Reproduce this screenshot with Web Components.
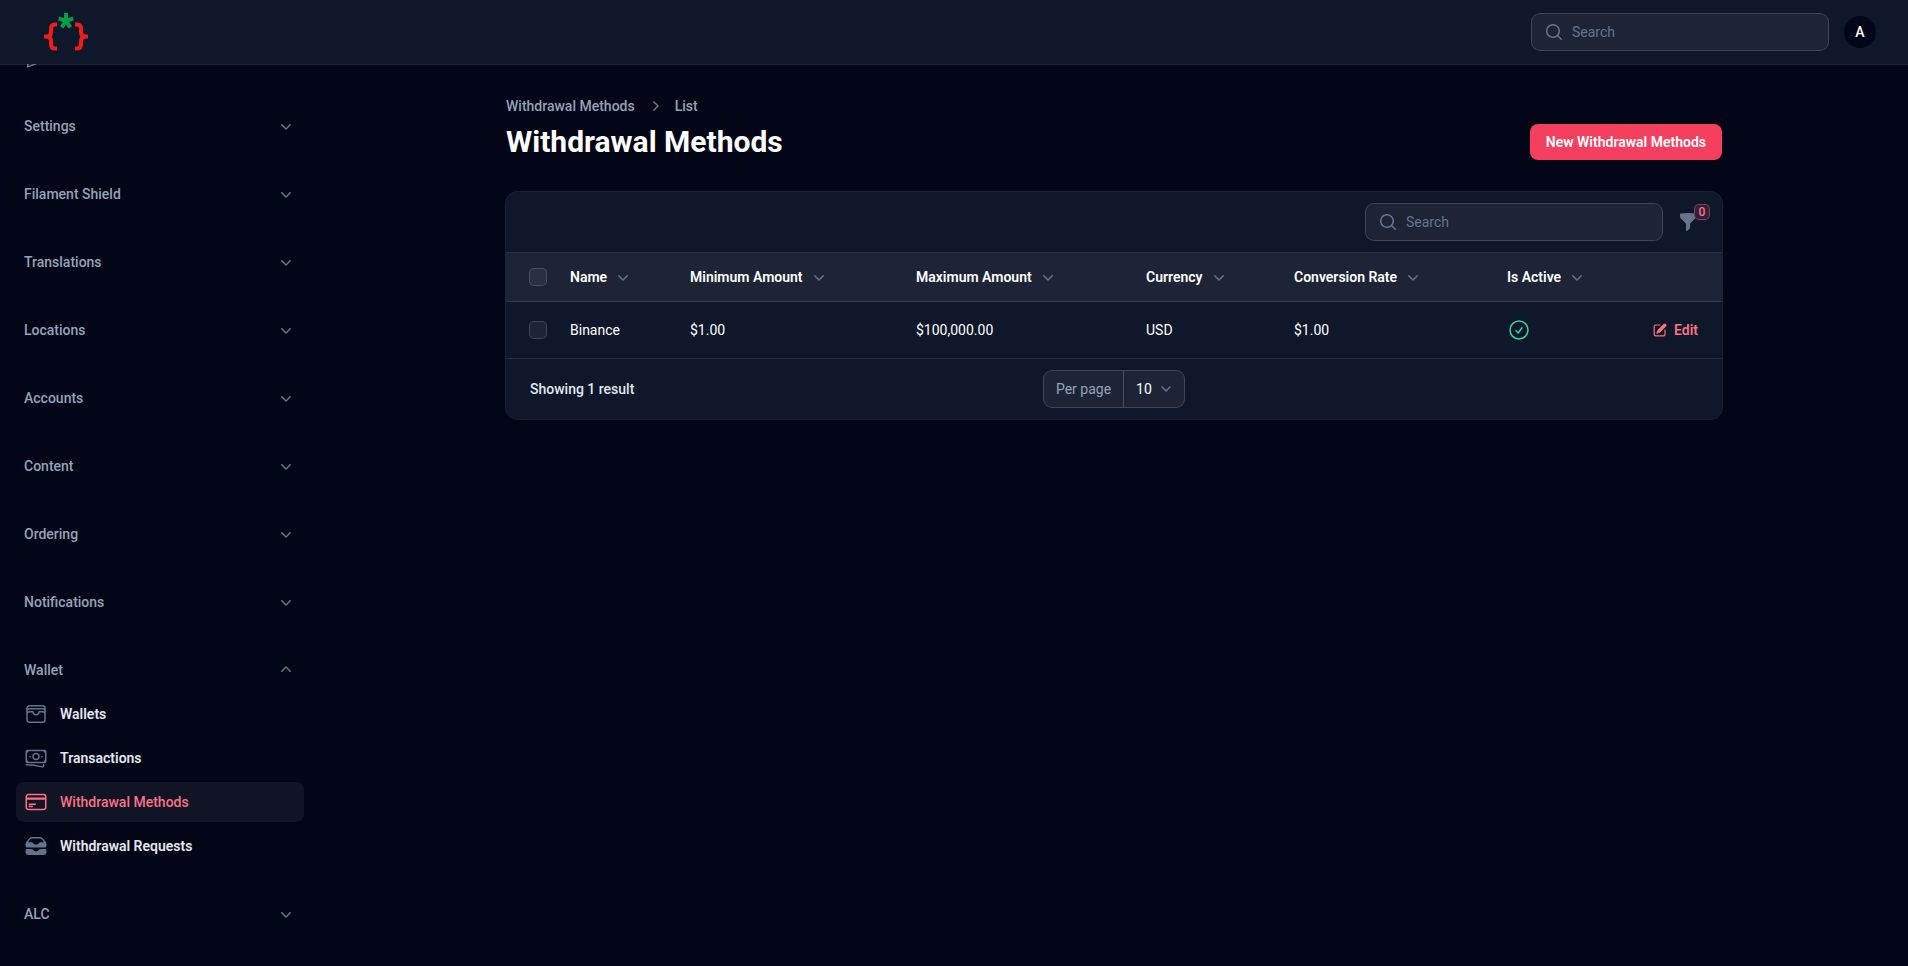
<!DOCTYPE html>
<html lang="en">
<head>
<meta charset="utf-8">
<meta name="viewport" content="width=device-width, initial-scale=1">
<title>Withdrawal Methods</title>
<style>
  :root {
    --bg: #020617;
    --surface: #0f172a;
    --muted: #94a3b8;
    --faint: #64748b;
    --line: rgba(255, 255, 255, .1);
    --ring: rgba(255, 255, 255, .2);
    --fill: rgba(255, 255, 255, .06);
    --accent: #f43f5e;
    --accent-soft: #fb7185;
    --success: #34d399;
  }
  * { box-sizing: border-box; }
  body {
    margin: 0;
    min-height: 100vh;
    background: var(--bg);
    color: #fff;
    font: 400 14px/20px Roboto, "Liberation Sans", sans-serif;
  }
</style>
</head>
<body>
<admin-app>
  <top-bar slot="top"></top-bar>
  <side-bar slot="side">
    <nav-item icon="send" aria-label="Messages"></nav-item>
    <nav-group label="Settings"></nav-group>
    <nav-group label="Filament Shield"></nav-group>
    <nav-group label="Translations"></nav-group>
    <nav-group label="Locations"></nav-group>
    <nav-group label="Accounts"></nav-group>
    <nav-group label="Content"></nav-group>
    <nav-group label="Ordering"></nav-group>
    <nav-group label="Notifications"></nav-group>
    <nav-group label="Wallet" open>
      <nav-item icon="wallet">Wallets</nav-item>
      <nav-item icon="banknotes">Transactions</nav-item>
      <nav-item icon="card" active>Withdrawal Methods</nav-item>
      <nav-item icon="inbox">Withdrawal Requests</nav-item>
    </nav-group>
    <nav-group label="ALC"></nav-group>
  </side-bar>
  <page-header>
    <a slot="parent" href="#methods">Withdrawal Methods</a>
    <span slot="current">List</span>
    <span slot="title">Withdrawal Methods</span>
    <span slot="action">New Withdrawal Methods</span>
  </page-header>
  <data-table></data-table>
</admin-app>

<script>
const define = (name, html, setup) => {
  const template = document.createElement('template');
  template.innerHTML = '<style>*{box-sizing:border-box}</style>' + html;
  customElements.define(name, class extends HTMLElement {
    constructor() {
      super();
      this.attachShadow({ mode: 'open' }).append(template.content.cloneNode(true));
    }
    connectedCallback() { if (setup) setup(this, this.shadowRoot); }
  });
};

const outline = d => `<svg viewBox="0 0 24 24" fill="none" stroke="currentColor" stroke-width="1.5" stroke-linecap="round" stroke-linejoin="round" aria-hidden="true"><path d="${d}"/></svg>`;
const solid = (d, box = 20) => `<svg viewBox="0 0 ${box} ${box}" fill="currentColor" aria-hidden="true"><path d="${d}"/></svg>`;
const ICONS = {
  send: outline('M6 12 3.269 3.125A59.769 59.769 0 0 1 21.485 12 59.768 59.768 0 0 1 3.27 20.875L5.999 12Zm0 0h7.5'),
  wallet: outline('M21 12a2.25 2.25 0 0 0-2.25-2.25H15a3 3 0 1 1-6 0H5.25A2.25 2.25 0 0 0 3 12m18 0v6a2.25 2.25 0 0 1-2.25 2.25H5.25A2.25 2.25 0 0 1 3 18v-6m18 0V9M3 12V9m18 0a2.25 2.25 0 0 0-2.25-2.25H5.25A2.25 2.25 0 0 0 3 9m18 0V6a2.25 2.25 0 0 0-2.25-2.25H5.25A2.25 2.25 0 0 0 3 6v3'),
  banknotes: outline('M2.25 18.75a60.07 60.07 0 0 1 15.797 2.101c.727.198 1.453-.342 1.453-1.096V18.75M3.75 4.5v.75A.75.75 0 0 1 3 6h-.75m0 0v-.375c0-.621.504-1.125 1.125-1.125H20.25M2.25 6v9m18-10.5v.75c0 .414.336.75.75.75h.75m-1.5-1.5h.375c.621 0 1.125.504 1.125 1.125v9.75c0 .621-.504 1.125-1.125 1.125h-.375m1.5-1.5H21a.75.75 0 0 0-.75.75v.75m0 0H3.75m0 0h-.375a1.125 1.125 0 0 1-1.125-1.125V15m1.5 1.5v-.75A.75.75 0 0 0 3 15h-.75M15 10.5a3 3 0 1 1-6 0 3 3 0 0 1 6 0Zm3 0h.008v.008H18V10.5Zm-12 0h.008v.008H6V10.5Z'),
  card: outline('M2.25 8.25h19.5M2.25 9h19.5m-16.5 5.25h6m-6 2.25h3m-3.75 3h15a2.25 2.25 0 0 0 2.25-2.25V6.75A2.25 2.25 0 0 0 19.5 4.5h-15a2.25 2.25 0 0 0-2.25 2.25v10.5A2.25 2.25 0 0 0 4.5 19.5Z'),
  inbox: solid('M1.5 9.832v1.793c0 1.036.84 1.875 1.875 1.875h17.25c1.035 0 1.875-.84 1.875-1.875V9.832a3 3 0 0 0-.722-1.952l-3.285-3.832A3 3 0 0 0 16.215 3h-8.43a3 3 0 0 0-2.278 1.048L2.222 7.88A3 3 0 0 0 1.5 9.832ZM7.785 4.5a1.5 1.5 0 0 0-1.139.524L3.881 8.25h3.165a3 3 0 0 1 2.496 1.336l.164.246a1.5 1.5 0 0 0 1.248.668h2.092a1.5 1.5 0 0 0 1.248-.668l.164-.246a3 3 0 0 1 2.496-1.336h3.165l-2.765-3.226a1.5 1.5 0 0 0-1.139-.524h-8.43ZM2.813 15c-.725 0-1.313.588-1.313 1.313V18a3 3 0 0 0 3 3h15a3 3 0 0 0 3-3v-1.688c0-.724-.588-1.312-1.313-1.312h-4.233a3 3 0 0 0-2.496 1.336l-.164.246a1.5 1.5 0 0 1-1.248.668h-2.092a1.5 1.5 0 0 1-1.248-.668l-.164-.246A3 3 0 0 0 7.046 15H2.812Z', 24).replace('<path ', '<path fill-rule="evenodd" '),
  check: outline('M9 12.75 11.25 15 15 9.75M21 12a9 9 0 1 1-18 0 9 9 0 0 1 18 0Z'),
  search: solid('M9 3.5a5.5 5.5 0 1 0 0 11 5.5 5.5 0 0 0 0-11ZM2 9a7 7 0 1 1 12.452 4.391l3.328 3.329a.75.75 0 1 1-1.06 1.06l-3.329-3.328A7 7 0 0 1 2 9Z').replace('<path ', '<path fill-rule="evenodd" '),
  down: solid('M5.22 8.22a.75.75 0 0 1 1.06 0L10 11.94l3.72-3.72a.75.75 0 1 1 1.06 1.06l-4.25 4.25a.75.75 0 0 1-1.06 0L5.22 9.28a.75.75 0 0 1 0-1.06Z'),
  right: solid('M8.22 5.22a.75.75 0 0 1 1.06 0l4.25 4.25a.75.75 0 0 1 0 1.06l-4.25 4.25a.75.75 0 0 1-1.06-1.06L11.94 10 8.22 6.28a.75.75 0 0 1 0-1.06Z'),
  funnel: solid('M2.628 1.601C5.028 1.206 7.49 1 10 1s4.973.206 7.372.601a.75.75 0 0 1 .628.74v2.288a2.25 2.25 0 0 1-.659 1.59l-4.682 4.683a2.25 2.25 0 0 0-.659 1.59v3.037c0 .684-.31 1.33-.844 1.757l-1.937 1.55A.75.75 0 0 1 8 18.25v-5.757a2.25 2.25 0 0 0-.659-1.591L2.659 6.22A2.25 2.25 0 0 1 2 4.629V2.34a.75.75 0 0 1 .628-.74Z'),
  pencil: solid('m5.433 13.917 1.262-3.155A4 4 0 0 1 7.58 9.42l6.92-6.918a2.121 2.121 0 0 1 3 3l-6.92 6.918c-.383.383-.84.685-1.343.886l-3.154 1.262a.5.5 0 0 1-.65-.65ZM3.5 5.75c0-.69.56-1.25 1.25-1.25H10A.75.75 0 0 0 10 3H4.75A2.75 2.75 0 0 0 2 5.75v9.5A2.75 2.75 0 0 0 4.75 18h9.5A2.75 2.75 0 0 0 17 15.25V10a.75.75 0 0 0-1.5 0v5.25c0 .69-.56 1.25-1.25 1.25h-9.5c-.69 0-1.25-.56-1.25-1.25v-9.5Z')
};

define('ui-icon', `
  <style>
    :host { display: block; flex: none; width: 20px; height: 20px; color: var(--faint); }
    svg { display: block; width: 100%; height: 100%; }
  </style><span></span>`,
  (host, root) => { root.querySelector('span').innerHTML = ICONS[host.getAttribute('name')] || ''; });

define('search-field', `
  <style>
    :host { display: block; width: 296px; max-width: 100%; }
    label {
      display: flex; align-items: center; gap: 8px; height: 36px; padding: 0 12px;
      border-radius: 8px; background: var(--fill); box-shadow: 0 0 0 1px var(--ring);
    }
    input {
      flex: 1; min-width: 0; height: 36px; padding: 0; border: 0; outline: 0;
      background: none; color: #fff; font: inherit;
    }
    input::placeholder { color: var(--faint); opacity: 1; }
  </style>
  <label><ui-icon name="search"></ui-icon><input type="text" placeholder="Search" aria-label="Search"></label>`);

define('brand-logo', `
  <style>
    :host { display: block; }
    svg { display: block; width: 48px; height: 40px; }
  </style>
  <svg viewBox="0 0 48 40" fill="none" role="img" aria-label="Home">
    <g stroke="#f21c17" stroke-width="4">
      <path d="M15 12.5h-2c-3 0-4 1.3-4 4v3.5c0 2.900-1.800 4.500-5 4.500h-2h2c3.200 0 5 1.600 5 4.500v3.500c0 2.700 1 4 4 4h2"/>
      <path d="M33 12.5h2c3 0 4 1.3 4 4v3.5c0 2.900 1.800 4.500 5 4.500h2h-2c-3.200 0-5 1.600-5 4.500v3.500c0 2.700-1 4-4 4h-2"/>
    </g>
    <path stroke="#049c47" stroke-width="4" d="M24 9V1M24 9l-7.200-2.600M24 9l7.200-2.600M24 9l-4.300 6.400M24 9l4.300 6.400"/>
  </svg>`);

define('top-bar', `
  <style>
    :host { display: block; }
    header {
      display: flex; align-items: center; gap: 16px; height: 64px; padding: 0 32px 0 42px;
      background: var(--surface); box-shadow: 0 1px 0 var(--line);
    }
    a { display: block; margin-right: auto; }
    button {
      width: 32px; height: 32px; padding: 0; border: 0; border-radius: 16px;
      background: var(--bg); color: #fff; font: 500 14px/32px Roboto, sans-serif;
    }
  </style>
  <header>
    <a href="#home"><brand-logo></brand-logo></a>
    <search-field></search-field>
    <button type="button" aria-label="User menu">A</button>
  </header>`);

define('nav-item', `
  <style>
    :host { display: block; }
    a {
      display: flex; align-items: center; gap: 12px; height: 40px; padding: 0 8px;
      border-radius: 8px; color: #e2e8f0; font-weight: 600; text-decoration: none;
    }
    ui-icon { width: 24px; height: 24px; }
    :host([active]) a { background: var(--fill); color: var(--accent-soft); font-weight: 500; }
    :host([active]) ui-icon { color: var(--accent-soft); }
  </style>
  <a href="#item"><ui-icon></ui-icon><slot></slot></a>`,
  (host, root) => {
    const icon = document.createElement('ui-icon');
    icon.setAttribute('name', host.getAttribute('icon'));
    root.querySelector('ui-icon').replaceWith(icon);
  });

define('nav-group', `
  <style>
    :host { display: flex; flex-direction: column; gap: 4px; }
    button {
      display: flex; align-items: center; justify-content: space-between; width: 100%; height: 40px;
      padding: 0 8px; border: 0; background: none; color: var(--muted);
      font: inherit; font-weight: 500; text-align: left;
    }
    :host([open]) ui-icon { transform: rotate(180deg); }
  </style>
  <button type="button"><span></span><ui-icon name="down"></ui-icon></button>
  <slot></slot>`,
  (host, root) => {
    root.querySelector('span').textContent = host.getAttribute('label');
    root.querySelector('button').setAttribute('aria-expanded', host.hasAttribute('open'));
  });

define('side-bar', `
  <style>
    :host { display: block; min-height: 0; overflow-y: auto; scrollbar-width: none; }
    nav { display: flex; flex-direction: column; gap: 28px; padding: 32px 16px; }
  </style>
  <nav aria-label="Main"><slot></slot></nav>`);

define('page-header', `
  <style>
    :host { display: flex; align-items: flex-end; justify-content: space-between; flex-wrap: wrap; gap: 16px; }
    nav { display: flex; align-items: center; gap: 10px; margin-bottom: 8px; color: var(--muted); font-weight: 500; }
    ::slotted(a) { color: inherit; text-decoration: none; }
    h1 { margin: 0; font-size: 30px; line-height: 36px; font-weight: 700; }
    button {
      height: 36px; padding: 0 16px; border: 0; border-radius: 8px;
      background: var(--accent); color: #fff; font: inherit; font-weight: 600;
    }
  </style>
  <div>
    <nav aria-label="Breadcrumb"><slot name="parent"></slot><ui-icon name="right"></ui-icon><slot name="current"></slot></nav>
    <h1><slot name="title"></slot></h1>
  </div>
  <button type="button"><slot name="action"></slot></button>`);

define('filter-button', `
  <style>
    :host { display: block; }
    button {
      position: relative; display: flex; align-items: center; justify-content: center;
      width: 36px; height: 36px; padding: 0; border: 0; background: none; font: inherit;
    }
    span {
      position: absolute; top: 0; right: -4px; width: 16px; height: 16px;
      border: 1px solid rgba(251, 113, 133, .4); border-radius: 5px; background: #33203a;
      color: var(--accent-soft); font-size: 12px; line-height: 14px; font-weight: 500; text-align: center;
    }
  </style>
  <button type="button" aria-label="Filter"><ui-icon name="funnel"></ui-icon><span>0</span></button>`);

define('per-page', `
  <style>
    :host { display: block; }
    div {
      display: flex; align-items: center; height: 36px; border-radius: 8px;
      background: var(--fill); box-shadow: 0 0 0 1px var(--ring);
    }
    label { padding: 0 12px; color: var(--muted); line-height: 36px; border-right: 1px solid var(--ring); }
    select {
      appearance: none; width: 60px; height: 36px; padding: 0 12px; border: 0; outline: 0; color: #fff; font: inherit;
      background: url("data:image/svg+xml,%3Csvg xmlns='http://www.w3.org/2000/svg' fill='none' viewBox='0 0 20 20'%3E%3Cpath stroke='%2364748b' stroke-linecap='round' stroke-linejoin='round' stroke-width='1.5' d='m6 8 4 4 4-4'/%3E%3C/svg%3E") no-repeat right 8px center / 20px 20px;
    }
  </style>
  <div><label for="size">Per page</label><select id="size"><option>10</option></select></div>`);

define('data-table', `
  <style>
    :host { display: block; border-radius: 12px; background: var(--surface); box-shadow: 0 0 0 1px var(--line); }
    .toolbar {
      display: flex; align-items: center; justify-content: flex-end; gap: 8px;
      padding: 12px 16px 12px 24px; border-bottom: 1px solid var(--line);
    }
    table { width: 100%; table-layout: fixed; border-spacing: 0; }
    th, td { padding: 0 12px; text-align: left; border-bottom: 1px solid var(--line); }
    th { height: 49px; background: var(--fill); font-weight: 600; }
    td { height: 57px; }
    th:first-child, td:first-child { padding-left: 24px; }
    td:last-child { padding-right: 24px; }
    th button {
      display: flex; align-items: center; gap: 6px; padding: 0; border: 0; background: none;
      color: #fff; font: inherit; white-space: nowrap;
    }
    .select { width: 52px; }
    .name { width: 120px; }
    .min { width: 226px; }
    .max { width: 230px; }
    .currency { width: 148px; }
    .rate { width: 213px; }
    input {
      display: block; appearance: none; width: 16px; height: 16px; margin: 0; border-radius: 4px;
      background: var(--fill); box-shadow: 0 0 0 1px var(--ring);
    }
    td ui-icon { width: 24px; height: 24px; color: var(--success); }
    td a {
      display: flex; align-items: center; justify-content: flex-end; gap: 6px;
      color: var(--accent-soft); font-weight: 600; text-decoration: none;
    }
    td a ui-icon { width: 16px; height: 16px; color: inherit; }
    footer { display: grid; grid-template-columns: 1fr auto 1fr; align-items: center; padding: 12px 24px; }
    footer span { color: #e2e8f0; font-weight: 500; }
  </style>
  <div class="toolbar"><search-field></search-field><filter-button></filter-button></div>
  <table>
    <thead>
      <tr>
        <th class="select"><input type="checkbox" aria-label="Select all"></th>
        <th class="name"><button type="button">Name<ui-icon name="down"></ui-icon></button></th>
        <th class="min"><button type="button">Minimum Amount<ui-icon name="down"></ui-icon></button></th>
        <th class="max"><button type="button">Maximum Amount<ui-icon name="down"></ui-icon></button></th>
        <th class="currency"><button type="button">Currency<ui-icon name="down"></ui-icon></button></th>
        <th class="rate"><button type="button">Conversion Rate<ui-icon name="down"></ui-icon></button></th>
        <th><button type="button">Is Active<ui-icon name="down"></ui-icon></button></th>
        <th></th>
      </tr>
    </thead>
    <tbody>
      <tr>
        <td><input type="checkbox" aria-label="Select Binance"></td>
        <td>Binance</td>
        <td>$1.00</td>
        <td>$100,000.00</td>
        <td>USD</td>
        <td>$1.00</td>
        <td><ui-icon name="check"></ui-icon></td>
        <td><a href="#edit"><ui-icon name="pencil"></ui-icon>Edit</a></td>
      </tr>
    </tbody>
  </table>
  <footer><span>Showing 1 result</span><per-page></per-page></footer>`);

define('admin-app', `
  <style>
    :host { display: grid; grid-template: 64px minmax(0, 1fr) / 320px minmax(0, 1fr); height: 100vh; }
    ::slotted([slot="top"]) { grid-column: 1 / -1; position: relative; z-index: 1; }
    main { min-height: 0; overflow-y: auto; padding: 0 32px; }
    section { display: flex; flex-direction: column; gap: 32px; max-width: 1216px; margin: 0 auto; padding: 32px 0; }
  </style>
  <slot name="top"></slot>
  <slot name="side"></slot>
  <main><section><slot></slot></section></main>`);

const sidebar = document.querySelector('side-bar');
sidebar.scrollTop = sidebar.scrollHeight;
</script>
</body>
</html>
